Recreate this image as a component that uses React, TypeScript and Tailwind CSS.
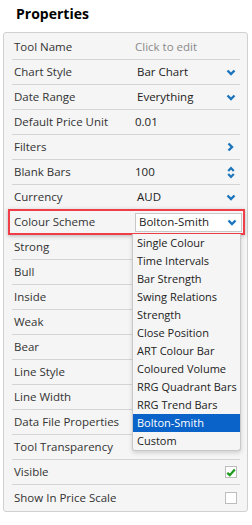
import React from "react";

const font = { fontFamily: '"Open Sans", "Liberation Sans", sans-serif' };

const options = [
  "Single Colour",
  "Time Intervals",
  "Bar Strength",
  "Swing Relations",
  "Strength",
  "Close Position",
  "ART Colour Bar",
  "Coloured Volume",
  "RRG Quadrant Bars",
  "RRG Trend Bars",
  "Bolton-Smith",
  "Custom",
];

function ChevronDown() {
  return (
    <svg width="10" height="7" viewBox="0 0 10 7" className="text-[#1c75bc]">
      <polyline points="1.5,1.5 5,5 8.5,1.5" fill="none" stroke="currentColor" strokeWidth="2.4" />
    </svg>
  );
}

function ChevronRight() {
  return (
    <svg width="7" height="10" viewBox="0 0 7 10" className="text-[#1c75bc]">
      <polyline points="1.5,1.5 5,5 1.5,8.5" fill="none" stroke="currentColor" strokeWidth="2.4" />
    </svg>
  );
}

function UpDown() {
  return (
    <svg width="8" height="13" viewBox="0 0 8 13" className="text-[#1c75bc]">
      <polyline points="1.2,5 4,2 6.8,5" fill="none" stroke="currentColor" strokeWidth="2.2" />
      <polyline points="1.2,8 4,11 6.8,8" fill="none" stroke="currentColor" strokeWidth="2.2" />
    </svg>
  );
}

function Row({
  label,
  children,
  last,
  short,
}: {
  label: string;
  children?: React.ReactNode;
  last?: boolean;
  short?: boolean;
}) {
  return (
    <div className={`flex h-[25px] items-center ${last ? "" : "border-b border-[#d4d4d4]"} ${short ? "mr-[107px]" : ""}`}>
      <div className="w-[123px] whitespace-nowrap pl-[2px] text-[#333]">{label}</div>
      {children}
    </div>
  );
}

function SelectVal({ value }: { value: string }) {
  return (
    <div className="flex flex-1 items-center justify-between pl-[2px] pr-[4px]">
      <span className="text-[#222]">{value}</span>
      <ChevronDown />
    </div>
  );
}

export default function App() {
  return (
    <div className="h-[525px] w-[252px] bg-white text-[11.5px]" style={font}>
      <div className="flex h-[32px] items-center pl-[16px] pb-[5px] text-[14px] font-bold text-black">
        Properties
      </div>
      <div className="relative mx-[3px] w-[245px] rounded-[3px] border border-[#d0d0d0] bg-[#f5f5f5] pb-[1px] pl-[8px] pr-[7px] pt-[2px]">
        <Row label="Tool Name">
          <span className="text-[#8a8a8a]">Click to edit</span>
        </Row>
        <Row label="Chart Style">
          <SelectVal value="Bar Chart" />
        </Row>
        <Row label="Date Range">
          <SelectVal value="Everything" />
        </Row>
        <Row label="Default Price Unit">
          <span className="text-[#222]">0.01</span>
        </Row>
        <Row label="Filters">
          <div className="flex flex-1 justify-end pr-[6px]">
            <ChevronRight />
          </div>
        </Row>
        <Row label="Blank Bars">
          <div className="flex flex-1 items-center justify-between pr-[5px]">
            <span className="text-[#222]">100</span>
            <UpDown />
          </div>
        </Row>
        <Row label="Currency">
          <SelectVal value="AUD" />
        </Row>
        <div className="relative">
          <Row label="Colour Scheme">
            <div className="mr-[-2px] flex h-[19px] flex-1 items-center justify-between border border-[#c8c8c8] bg-white pl-[3px] pr-[4px]">
              <span className="text-[#222]">Bolton-Smith</span>
              <ChevronDown />
            </div>
          </Row>
          <div className="pointer-events-none absolute left-[-4px] right-[-5px] top-[-1px] bottom-[0px] border-[2.5px] border-[#ef3e47] shadow-[0_1px_4px_rgba(0,0,0,0.25)]" />
          <div className="absolute left-[120px] top-[24px] w-[109px] rounded-b-[3px] border border-t-0 border-[#c8c8c8] bg-[#f5f5f5] shadow-[0_2px_4px_rgba(0,0,0,0.15)]">
            {options.map((o) => (
              <div
                key={o}
                className={`flex h-[18px] items-center whitespace-nowrap pl-[4px] text-[11px] ${o === "Bolton-Smith" ? "bg-[#0a63c9] text-white" : "text-[#222]"}`}
              >
                {o}
              </div>
            ))}
          </div>
        </div>
        <Row label="Strong" short />
        <Row label="Bull" short />
        <Row label="Inside" short />
        <Row label="Weak" short />
        <Row label="Bear" short />
        <Row label="Line Style" short />
        <Row label="Line Width" short />
        <Row label="Data File Properties" short />
        <Row label="Tool Transparency" />
        <Row label="Visible">
          <div className="flex flex-1 justify-end pr-[3px]">
            <div className="flex h-[12px] w-[12px] items-center justify-center border border-[#bdbdbd] bg-white">
              <svg width="10" height="9" viewBox="0 0 10 9">
                <polyline points="1.3,4.8 3.8,7.2 8.8,1.5" fill="none" stroke="#1e9a1e" strokeWidth="2.3" />
              </svg>
            </div>
          </div>
        </Row>
        <Row label="Show In Price Scale" last>
          <div className="flex flex-1 justify-end pr-[3px]">
            <div className="h-[12px] w-[12px] border border-[#bdbdbd] bg-white" />
          </div>
        </Row>
      </div>
    </div>
  );
}
